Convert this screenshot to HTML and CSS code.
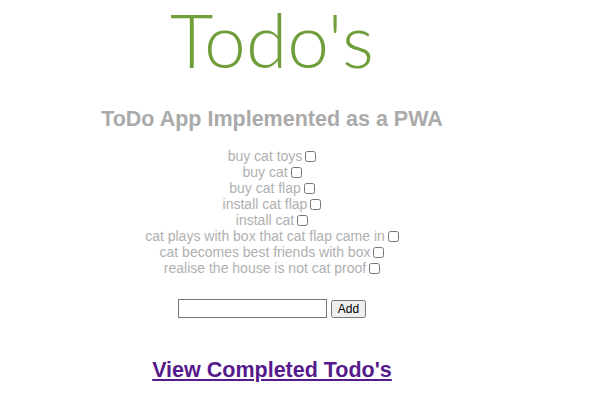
FILE: index.html
```html
<!DOCTYPE html>
<html>
<head>
<meta charset="utf-8">
<link rel="stylesheet" href="styles.css">
</head>
<body>
<div class="app">
  <h1 class="title">Todo's</h1>
  <h2 class="subtitle">ToDo App Implemented as a PWA</h2>
  <ul class="todos">
    <li>buy cat toys<input type="checkbox"></li>
    <li>buy cat<input type="checkbox"></li>
    <li>buy cat flap<input type="checkbox"></li>
    <li>install cat flap<input type="checkbox"></li>
    <li>install cat<input type="checkbox"></li>
    <li>cat plays with box that cat flap came in<input type="checkbox"></li>
    <li>cat becomes best friends with box<input type="checkbox"></li>
    <li>realise the house is not cat proof<input type="checkbox"></li>
  </ul>
  <form class="add-form">
    <input class="add-input" type="text">
    <button class="add-btn" type="button">Add</button>
  </form>
  <a class="completed" href="#">View Completed Todo's</a>
</div>
</body>
</html>
```

FILE: styles.css
```css
body {
  margin: 0;
  font-family: "Liberation Sans", Arial, sans-serif;
}
.app {
  width: 544px;
  display: flex;
  flex-direction: column;
  align-items: center;
}
.title {
  margin: -6px 0 0;
  font-family: Lato, sans-serif;
  font-weight: 300;
  font-size: 75px;
  line-height: 90px;
  color: #6f9e3a;
}
.subtitle {
  margin: 22px 0 0;
  font-size: 21.5px;
  line-height: 26px;
  font-weight: bold;
  color: #aaaaaa;
}
.todos {
  list-style: none;
  margin: 16px 0 0;
  padding: 0;
  text-align: center;
  font-family: "Liberation Sans", Arial, sans-serif;
  font-size: 14px;
  line-height: 16px;
  color: #b0b0b0;
}
.todos li {
  display: flex;
  justify-content: center;
  align-items: center;
  height: 16px;
}
.todos input {
  width: 11px;
  height: 11px;
  margin: 0 0 0 3px;
}
.add-form {
  margin: 23px 0 0;
  display: flex;
  gap: 4px;
  align-items: center;
}
.add-input {
  width: 145px;
  height: 15px;
  padding: 1px;
  border: 1px solid #767676;
  margin: 0;
}
.add-btn {
  font-family: "Liberation Sans", Arial, sans-serif;
  font-size: 12px;
  height: 18px;
  padding: 0 5px;
  margin: 0;
}
.completed {
  margin-top: 40px;
  font-size: 21.5px;
  font-weight: bold;
  color: #551a8b;
}
```
